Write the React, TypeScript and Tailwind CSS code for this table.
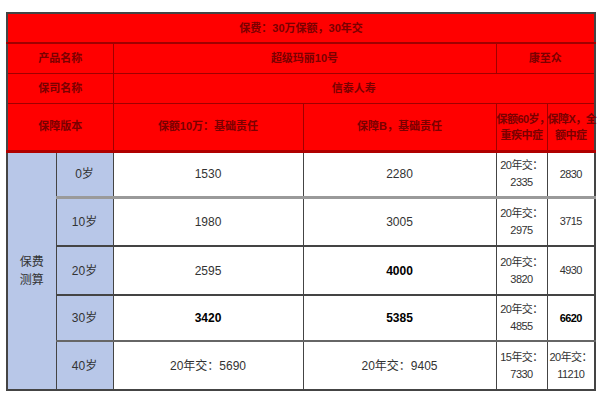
import React from 'react';

const rows = [
  { age: '0岁', a: '1530', b: '2280', c: ['20年交：', '2335'], d: '2830', bold: [] as string[], line: 'border-b-[3px] border-b-[#9a9a9a]' },
  { age: '10岁', a: '1980', b: '3005', c: ['20年交：', '2975'], d: '3715', bold: [], line: 'border-b-2 border-b-[#444]' },
  { age: '20岁', a: '2595', b: '4000', c: ['20年交：', '3820'], d: '4930', bold: ['b'], line: 'border-b-2 border-b-[#444]' },
  { age: '30岁', a: '3420', b: '5385', c: ['20年交：', '4855'], d: '6620', bold: ['a', 'b', 'd'], line: 'border-b-2 border-b-[#666]' },
  { age: '40岁', a: '20年交：5690', b: '20年交：9405', c: ['15年交：', '7330'], d: ['20年交：', '11210'], bold: [], line: 'border-b-2 border-b-[#444]' },
];

const head = "bg-[#ff0000] text-[#7a0000] text-[11px] text-center border border-[#a00000] font-bold p-0";
const headLast = `${head} border-b-[3px] border-b-[#b00000]`;

export default function App() {
  return (
    <div className="w-[600px] h-[400px] bg-white pt-[12px] pl-[6px]" style={{ fontFamily: '"Liberation Sans", "Noto Sans CJK SC", sans-serif' }}>
      <table className="border-collapse table-fixed w-[588px] border-2 border-[#444]">
        <colgroup>
          <col className="w-[49px]" />
          <col className="w-[57px]" />
          <col className="w-[190px]" />
          <col className="w-[193px]" />
          <col className="w-[51px]" />
          <col className="w-[48px]" />
        </colgroup>
        <tbody>
          <tr className="h-[30px]">
            <td colSpan={6} className={`${head} border-b-2`}>保费：30万保额，30年交</td>
          </tr>
          <tr className="h-[30px]">
            <td colSpan={2} className={head}>产品名称</td>
            <td colSpan={2} className={head}>超级玛丽10号</td>
            <td colSpan={2} className={head}>康至众</td>
          </tr>
          <tr className="h-[30px]">
            <td colSpan={2} className={head}>保司名称</td>
            <td colSpan={4} className={head}>信泰人寿</td>
          </tr>
          <tr className="h-[48px]">
            <td colSpan={2} className={headLast}>保障版本</td>
            <td className={headLast}>保额10万：基础责任</td>
            <td className={headLast}>保障B，基础责任</td>
            <td className={`${headLast} text-[9px] leading-[16px] tracking-tighter whitespace-nowrap`}>保额60岁，<br />重疾中症</td>
            <td className={`${headLast} text-[8.5px] leading-[16px] tracking-tighter whitespace-nowrap`}>保障X，全<br />额中症</td>
          </tr>
          {rows.map((r, i) => {
            const h = i === 0 || i === 3 ? 'h-[46px]' : 'h-[49px]';
            const cell = `p-0 text-center text-[12px] text-[#333] border-x border-[#444] whitespace-nowrap ${r.line}`;
            const narrow = `p-0 text-center text-[11px] text-[#333] border-x border-[#444] whitespace-nowrap leading-[17px] tracking-tighter ${r.line}`;
            return (
              <tr key={r.age} className={h}>
                {i === 0 && (
                  <td rowSpan={5} className="p-0 bg-[#b8c7e8] border border-[#444] text-center text-[12px] text-[#333] leading-[18px]">
                    保费<br />测算
                  </td>
                )}
                <td className={`${cell} bg-[#b8c7e8]`}>{r.age}</td>
                <td className={`${cell} ${r.bold.includes('a') ? 'font-bold text-black' : ''}`}>{r.a}</td>
                <td className={`${cell} ${r.bold.includes('b') ? 'font-bold text-black' : ''}`}>{r.b}</td>
                <td className={narrow}>
                  {r.c[0]}<br />{r.c[1]}
                </td>
                <td className={`${narrow} ${r.bold.includes('d') ? 'font-bold text-black' : ''}`}>
                  {Array.isArray(r.d) ? (<>{r.d[0]}<br />{r.d[1]}</>) : r.d}
                </td>
              </tr>
            );
          })}
        </tbody>
      </table>
    </div>
  );
}
